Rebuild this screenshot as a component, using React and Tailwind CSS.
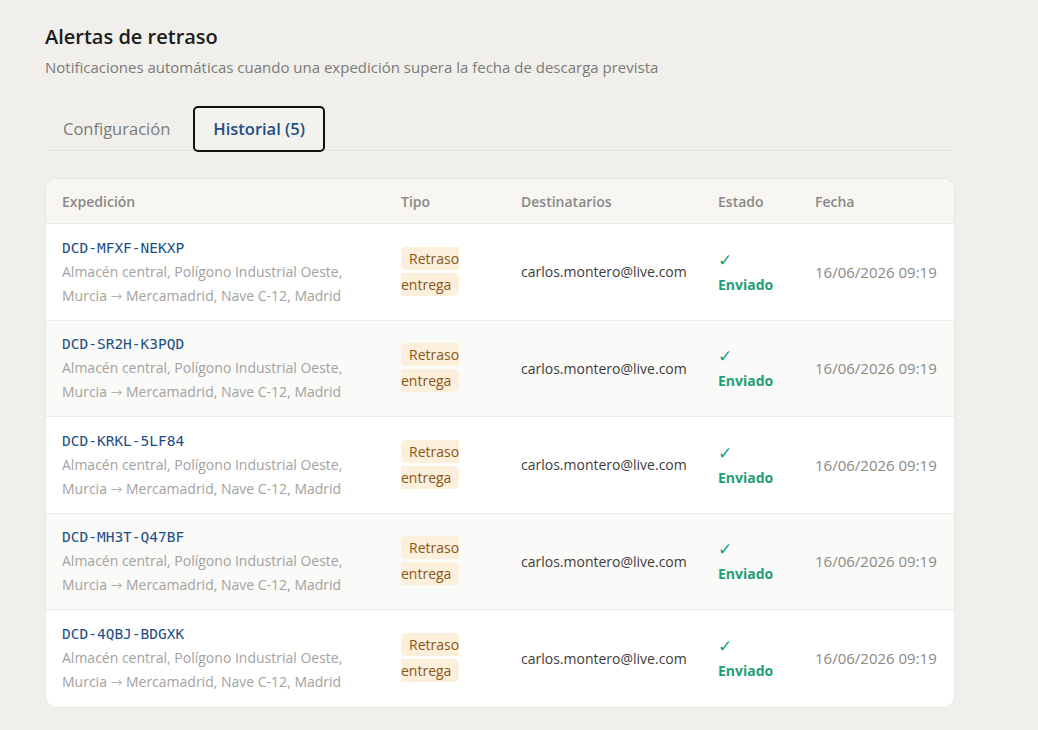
import React from "react";

const rows = ["DCD-MFXF-NEKXP", "DCD-SR2H-K3PQD", "DCD-KRKL-5LF84", "DCD-MH3T-Q47BF", "DCD-4QBJ-BDGXK"];

export default function App() {
  return (
    <div className="min-h-[730px] w-full bg-[#f0efeb] text-[#1f1f1f]" style={{ fontFamily: '"Open Sans", "Noto Sans", sans-serif' }}>
      <div className="w-[910px] ml-[45px] pt-[23px]">
        <h1 className="text-[20px] leading-[28px] font-semibold text-[#1c1c1c]">Alertas de retraso</h1>
        <p className="mt-[5px] text-[15px] leading-[22px] text-[#7c7b78]">
          Notificaciones automáticas cuando una expedición supera la fecha de descarga prevista
        </p>
        <div className="mt-[26px] flex items-end border-b border-[#e4e3de] h-[47px]">
          <div className="h-[46px] mb-[-2px] px-[18px] flex items-center text-[16.5px] text-[#7c7b78]">Configuración</div>
          <div className="h-[46px] mb-[-2px] ml-[5px] px-[18px] flex items-center rounded-[5px] border-2 border-[#111] bg-[#f3f2ee] text-[16.5px] font-semibold text-[#1c4f86]">
            Historial (5)
          </div>
        </div>
        <div className="mt-[27px] rounded-[12px] border border-[#e6e5e0] bg-white overflow-hidden">
          <div className="flex h-[45px] items-center bg-[#f7f6f3] border-b border-[#e8e7e2] text-[14px] font-semibold text-[#8a8985]">
            <div className="w-[339px] pl-[16px]">Expedición</div>
            <div className="w-[120px] pl-[16px]">Tipo</div>
            <div className="w-[197px] pl-[16px]">Destinatarios</div>
            <div className="w-[97px] pl-[16px]">Estado</div>
            <div className="flex-1 pl-[16px]">Fecha</div>
          </div>
          {rows.map((id, i) => (
            <div
              key={id}
              className={`flex items-center h-[96.5px] ${i % 2 === 1 ? "bg-[#fafaf8]" : "bg-white"} ${i < rows.length - 1 ? "border-b border-[#ecebe7]" : ""}`}
            >
              <div className="w-[339px] pl-[16px]">
                <div className="text-[14.5px] leading-[24px] text-[#1c4f86]" style={{ fontFamily: '"DejaVu Sans Mono", monospace' }}>{id}</div>
                <div className="text-[14px] leading-[24px] text-[#a3a29e]">
                  Almacén central, Polígono Industrial Oeste,
                  <br />
                  Murcia <span style={{ fontFamily: '"DejaVu Sans", sans-serif' }} className="text-[14px] font-light">→</span> Mercamadrid, Nave C-12, Madrid
                </div>
              </div>
              <div className="w-[120px] pl-[16px] pr-[16px]">
                <div className="w-[62px] text-[14px] leading-[26px]">
                  <span className="bg-[#fcefdc] text-[#8a5514] px-[8px] py-[2px] rounded-[5px]">Retraso entrega</span>
                </div>
              </div>
              <div className="w-[197px] pl-[16px] text-[14px] text-[#3d3c39]">carlos.montero@live.com</div>
              <div className="w-[97px] pl-[16px] leading-[25px]">
                <div className="text-[17px] text-[#1f9e78]">✓</div>
                <div className="text-[14px] font-bold text-[#1f9e78]">Enviado</div>
              </div>
              <div className="flex-1 pl-[16px] text-[15px] text-[#8a8985]">16/06/2026 09:19</div>
            </div>
          ))}
        </div>
      </div>
    </div>
  );
}
